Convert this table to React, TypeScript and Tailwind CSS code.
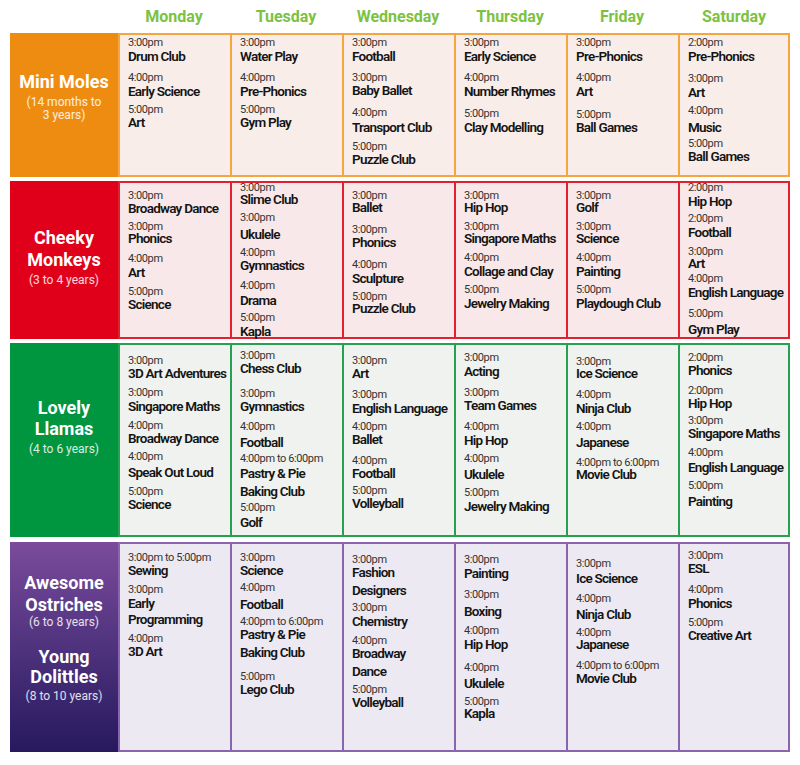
import React from 'react';
import clsx from 'clsx';

// [time, activity, space above, activity shift, activity line height]
type Item = [string, string, number, number, number?];

const MT: Record<number, string> = {
  [-2]: 'mt-[-2px]',
  [-1]: 'mt-[-1px]',
  0: 'mt-0',
  1: 'mt-[1px]',
  2: 'mt-[2px]',
  3: 'mt-[3px]',
  4: 'mt-[4px]',
  5: 'mt-[5px]',
  6: 'mt-[6px]',
  7: 'mt-[7px]',
  8: 'mt-[8px]',
  9: 'mt-[9px]',
  10: 'mt-[10px]',
  11: 'mt-[11px]',
  12: 'mt-[12px]',
  14: 'mt-[14px]',
  15: 'mt-[15px]',
};

const LEAD: Record<number, string> = {
  14: 'leading-[14px]',
  16: 'leading-[16px]',
  18: 'leading-[18px]',
};

const days = ['Monday', 'Tuesday', 'Wednesday', 'Thursday', 'Friday', 'Saturday'];

type Row = {
  height: string;
  spacing: string;
  labelBg: string;
  border: string;
  cellBg: string;
  label: React.ReactNode;
  cells: Item[][];
};

const rows: Row[] = [
  {
    height: 'h-[144px]',
    spacing: '',
    labelBg: 'bg-[#ee8c12]',
    border: 'border-[#f5a63f]',
    cellBg: 'bg-[#f9ede9]',
    label: (
      <div className="pt-[38px]">
        <div className="text-[18px] font-bold leading-[22px]">Mini Moles</div>
        <div className="mt-[3px] text-[12px] leading-[13px] text-white/85">
          (14 months to
          <br />3 years)
        </div>
      </div>
    ),
    cells: [
      [['3:00pm', 'Drum Club', 3, 1], ['4:00pm', 'Early Science', 10, 1], ['5:00pm', 'Art', 7, 0]],
      [['3:00pm', 'Water Play', 3, 1], ['4:00pm', 'Pre-Phonics', 10, 1], ['5:00pm', 'Gym Play', 7, 0]],
      [['3:00pm', 'Football', 3, 1], ['3:00pm', 'Baby Ballet', 10, 0], ['4:00pm', 'Transport Club', 11, 2], ['5:00pm', 'Puzzle Club', 8, 0]],
      [['3:00pm', 'Early Science', 3, 1], ['4:00pm', 'Number Rhymes', 10, 1], ['5:00pm', 'Clay Modelling', 11, 1]],
      [['3:00pm', 'Pre-Phonics', 3, 1], ['4:00pm', 'Art', 10, 1], ['5:00pm', 'Ball Games', 12, 0]],
      [['2:00pm', 'Pre-Phonics', 3, 1], ['3:00pm', 'Art', 11, 1], ['4:00pm', 'Music', 7, 4], ['5:00pm', 'Ball Games', 5, 0]],
    ],
  },
  {
    height: 'h-[158px]',
    spacing: 'mt-[4px]',
    labelBg: 'bg-[#e1001a]',
    border: 'border-[#e3202e]',
    cellBg: 'bg-[#f8e8e9]',
    label: (
      <div className="pt-[46px]">
        <div className="text-[18px] font-bold leading-[22px]">
          Cheeky
          <br />
          Monkeys
        </div>
        <div className="mt-[3px] text-[12px] leading-[13px] text-white/85">(3 to 4 years)</div>
      </div>
    ),
    cells: [
      [['3:00pm', 'Broadway Dance', 8, 0], ['3:00pm', 'Phonics', 7, -1], ['4:00pm', 'Art', 9, 1], ['5:00pm', 'Science', 8, 0]],
      [['3:00pm', 'Slime Club', 0, -1], ['3:00pm', 'Ukulele', 7, 4], ['4:00pm', 'Gymnastics', 7, 0], ['4:00pm', 'Drama', 9, 2], ['5:00pm', 'Kapla', 6, 1]],
      [['3:00pm', 'Ballet', 8, -1], ['3:00pm', 'Phonics', 11, 0], ['4:00pm', 'Sculpture', 11, 1], ['5:00pm', 'Puzzle Club', 7, -1]],
      [['3:00pm', 'Hip Hop', 8, -1], ['3:00pm', 'Singapore Maths', 8, -1], ['4:00pm', 'Collage and Clay', 8, 1], ['5:00pm', 'Jewelry Making', 7, 1]],
      [['3:00pm', 'Golf', 8, -1], ['3:00pm', 'Science', 8, -1], ['4:00pm', 'Painting', 8, 1], ['5:00pm', 'Playdough Club', 7, 1]],
      [['2:00pm', 'Hip Hop', 0, 1], ['2:00pm', 'Football', 6, 1], ['3:00pm', 'Art', 8, -1], ['4:00pm', 'English Language', 4, 1], ['5:00pm', 'Gym Play', 10, 3]],
    ],
  },
  {
    height: 'h-[194px]',
    spacing: 'mt-[4px]',
    labelBg: 'bg-[#00953f]',
    border: 'border-[#27a050]',
    cellBg: 'bg-[#eff2ee]',
    label: (
      <div className="pt-[54px]">
        <div className="text-[18px] font-bold leading-[21px]">
          Lovely
          <br />
          Llamas
        </div>
        <div className="mt-[4px] text-[12px] leading-[13px] text-white/85">(4 to 6 years)</div>
      </div>
    ),
    cells: [
      [['3:00pm', '3D Art Adventures', 11, 0], ['3:00pm', 'Singapore Maths', 8, 1], ['4:00pm', 'Broadway Dance', 8, 0], ['4:00pm', 'Speak Out Loud', 7, 3], ['5:00pm', 'Science', 8, 0]],
      [['3:00pm', 'Chess Club', 6, 0], ['3:00pm', 'Gymnastics', 14, 0], ['4:00pm', 'Football', 9, 3], ['4:00pm to 6:00pm', 'Pastry & Pie\nBaking Club', 5, 0, 18], ['5:00pm', 'Golf', 3, 2]],
      [['3:00pm', 'Art', 11, 0], ['3:00pm', 'English Language', 10, 1], ['4:00pm', 'Ballet', 7, 0], ['4:00pm', 'Football', 10, 0], ['5:00pm', 'Volleyball', 6, 0]],
      [['3:00pm', 'Acting', 8, 1], ['3:00pm', 'Team Games', 10, 0], ['4:00pm', 'Hip Hop', 10, 1], ['4:00pm', 'Ukulele', 7, 3], ['5:00pm', 'Jewelry Making', 7, 1]],
      [['3:00pm', 'Ice Science', 12, -1], ['4:00pm', 'Ninja Club', 10, 1], ['4:00pm', 'Japanese', 7, 3], ['4:00pm to 6:00pm', 'Movie Club', 9, -1]],
      [['2:00pm', 'Phonics', 8, 0], ['2:00pm', 'Hip Hop', 9, 0], ['3:00pm', 'Singapore Maths', 6, 0], ['4:00pm', 'English Language', 8, 2], ['5:00pm', 'Painting', 7, 3]],
    ],
  },
  {
    height: 'h-[210px]',
    spacing: 'mt-[5px]',
    labelBg: 'bg-linear-to-b from-[#7b4b9c] to-[#27195f]',
    border: 'border-[#8a64ad]',
    cellBg: 'bg-[#ece9f3]',
    label: (
      <div className="pt-[30px]">
        <div className="text-[18px] font-bold leading-[22px]">
          Awesome
          <br />
          Ostriches
        </div>
        <div className="text-[12px] leading-[13px] text-white/85">(6 to 8 years)</div>
        <div className="mt-[18px] text-[18px] font-bold leading-[20px]">
          Young
          <br />
          Dolittles
        </div>
        <div className="mt-[3px] text-[12px] leading-[13px] text-white/85">(8 to 10 years)</div>
      </div>
    ),
    cells: [
      [['3:00pm to 5:00pm', 'Sewing', 9, 0], ['3:00pm', 'Early\nProgramming', 8, 0, 16], ['4:00pm', '3D Art', 7, 0]],
      [['3:00pm', 'Science', 9, 0], ['4:00pm', 'Football', 6, 4], ['4:00pm to 6:00pm', 'Pastry & Pie\nBaking Club', 6, -2, 18], ['5:00pm', 'Lego Club', 11, 0]],
      [['3:00pm', 'Fashion\nDesigners', 11, -2, 18], ['3:00pm', 'Chemistry', 4, 1], ['4:00pm', 'Broadway\nDance', 8, -2, 18], ['5:00pm', 'Volleyball', 5, 0]],
      [['3:00pm', 'Painting', 11, 1], ['3:00pm', 'Boxing', 10, 4], ['4:00pm', 'Hip Hop', 8, 1], ['4:00pm', 'Ukulele', 12, 3], ['5:00pm', 'Kapla', 7, -1]],
      [['3:00pm', 'Ice Science', 15, 2], ['4:00pm', 'Ninja Club', 9, 3], ['4:00pm', 'Japanese', 7, -1], ['4:00pm to 6:00pm', 'Movie Club', 10, 0]],
      [['3:00pm', 'ESL', 7, 0], ['4:00pm', 'Phonics', 10, 1], ['5:00pm', 'Creative Art', 8, 0]],
    ],
  },
];

const Cell: React.FC<{ items: Item[]; border: string; bg: string; last: boolean }> = ({ items, border, bg, last }) => (
  <div className={clsx('w-[112px] h-full border-y-2 border-l-2 pl-2', border, bg, last && 'border-r-2')}>
    {items.map(([time, activity, space, shift, lead = 14], i) => (
      <div key={i} className={MT[space]}>
        <div className="text-[11px] leading-[10px] tracking-[-0.4px] text-[#333] whitespace-pre">{time}</div>
        <div
          className={clsx(
            'text-[13.5px] font-semibold tracking-[-0.75px] text-[#141414] whitespace-pre',
            LEAD[lead],
            MT[shift]
          )}
        >
          {activity}
        </div>
      </div>
    ))}
  </div>
);

export default function App() {
  return (
    <div className="w-[800px] h-[765px] bg-white px-[10px] font-['Roboto','Liberation_Sans',sans-serif]">
      {/* Day headers */}
      <div className="flex h-[33px] items-center">
        <div className="w-[108px]" />
        {days.map((d) => (
          <div key={d} className="w-[112px] text-center text-[16px] font-bold text-[#7cc242]">
            {d}
          </div>
        ))}
      </div>

      {rows.map((row, r) => (
        <div key={r} className={clsx('flex', row.height, row.spacing)}>
          <div className={clsx('w-[108px] h-full text-center text-white', row.labelBg)}>{row.label}</div>
          {row.cells.map((items, c) => (
            <Cell key={c} items={items} border={row.border} bg={row.cellBg} last={c === 5} />
          ))}
        </div>
      ))}
    </div>
  );
}
